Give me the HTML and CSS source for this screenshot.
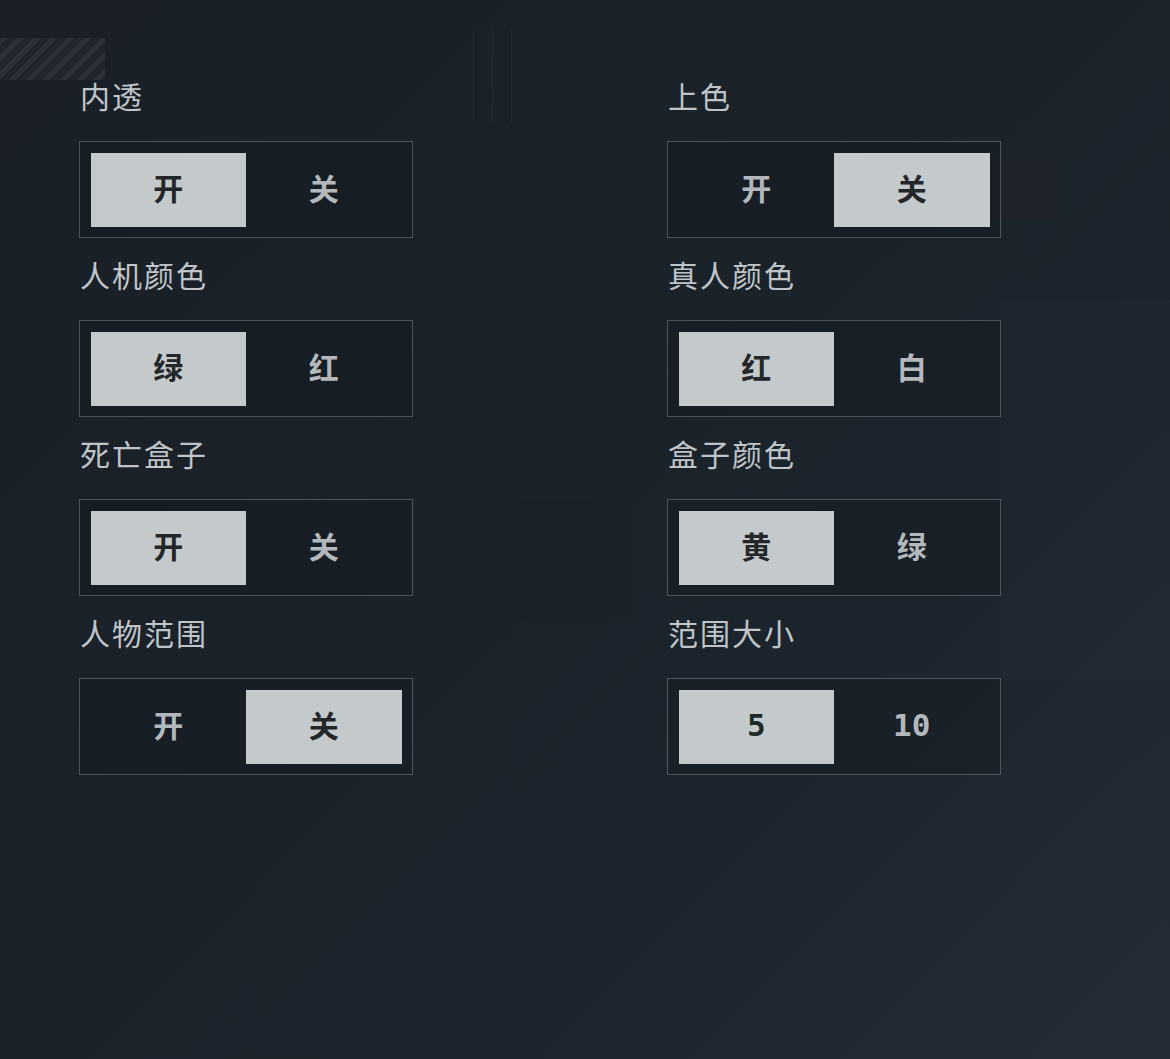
FILE: index.html
```html
<!DOCTYPE html>
<html lang="zh-CN">
<head>
<meta charset="utf-8">
<title>设置</title>
<link rel="stylesheet" href="styles.css">
</head>
<body>
<div class="bg">
  <div class="hatch"></div>
  <div class="vlines"></div>
  <div class="tile t1"></div>
  <div class="tile t2"></div>
  <div class="tile t3"></div>
  <main class="grid">
    <section class="field">
      <div class="label">内透</div>
      <div class="seg"><span class="opt on">开</span><span class="opt">关</span></div>
    </section>
    <section class="field">
      <div class="label">上色</div>
      <div class="seg"><span class="opt">开</span><span class="opt on">关</span></div>
    </section>
    <section class="field">
      <div class="label">人机颜色</div>
      <div class="seg"><span class="opt on">绿</span><span class="opt">红</span></div>
    </section>
    <section class="field">
      <div class="label">真人颜色</div>
      <div class="seg"><span class="opt on">红</span><span class="opt">白</span></div>
    </section>
    <section class="field">
      <div class="label">死亡盒子</div>
      <div class="seg"><span class="opt on">开</span><span class="opt">关</span></div>
    </section>
    <section class="field">
      <div class="label">盒子颜色</div>
      <div class="seg"><span class="opt on">黄</span><span class="opt">绿</span></div>
    </section>
    <section class="field">
      <div class="label">人物范围</div>
      <div class="seg"><span class="opt">开</span><span class="opt on">关</span></div>
    </section>
    <section class="field">
      <div class="label">范围大小</div>
      <div class="seg"><span class="opt on num">5</span><span class="opt num">10</span></div>
    </section>
  </main>
</div>
</body>
</html>
```

FILE: styles.css
```css
* { box-sizing: border-box; }
html, body { margin: 0; padding: 0; }
body {
  width: 1170px;
  height: 1059px;
  overflow: hidden;
  font-family: "Noto Sans CJK SC", "Noto Sans", sans-serif;
}
.bg {
  position: relative;
  width: 1170px;
  height: 1059px;
  background:
    linear-gradient(135deg, #1a1f27 0%, #1a222a 45%, #1c252d 70%, #252c36 100%);
  overflow: hidden;
}
.hatch {
  position: absolute;
  left: 0; top: 38px;
  width: 105px; height: 42px;
  background: repeating-linear-gradient(135deg, #34383d 0 5px, #23272d 5px 12px);
  opacity: 0.7;
}
.vlines {
  position: absolute;
  left: 455px; top: 30px;
  width: 70px; height: 95px;
  background: repeating-linear-gradient(90deg, transparent 0 18px, rgba(110,150,160,0.07) 18px 19px);
}
.tile { position: absolute; }
.t1 { left: 940px; top: 160px; width: 120px; height: 60px; background: rgba(60,30,35,0.1); }
.t2 { left: 520px; top: 500px; width: 110px; height: 120px; background: rgba(40,25,35,0.08); }
.t3 { left: 1000px; top: 300px; width: 170px; height: 380px; background: rgba(255,255,255,0.01); }

.grid {
  position: relative;
  display: grid;
  grid-template-columns: 334px 334px;
  column-gap: 254px;
  padding: 59px 0 0 79px;
}
.field {
  height: 179px;
}
.label {
  height: 82px;
  padding: 16px 0 0 1px;
  font-size: 30px;
  line-height: 40px;
  color: #bfc4c8;
  letter-spacing: 2px;
}
.seg {
  width: 334px;
  height: 97px;
  border: 1.5px solid rgba(120,128,136,0.55);
  background: rgba(14,18,24,0.25);
  padding: 10.5px;
  display: flex;
}
.opt {
  flex: 1;
  display: flex;
  align-items: center;
  justify-content: center;
  padding-bottom: 5px;
  font-size: 30px;
  font-weight: 700;
  color: #b3b8bc;
}
.opt.on {
  background: #c4cacb;
  color: #24272a;
}
.opt.num {
  font-family: "DejaVu Sans Mono", monospace;
  font-size: 31px;
  padding-bottom: 3px;
}
.opt.on.num { color: #1f2a24; }
```
